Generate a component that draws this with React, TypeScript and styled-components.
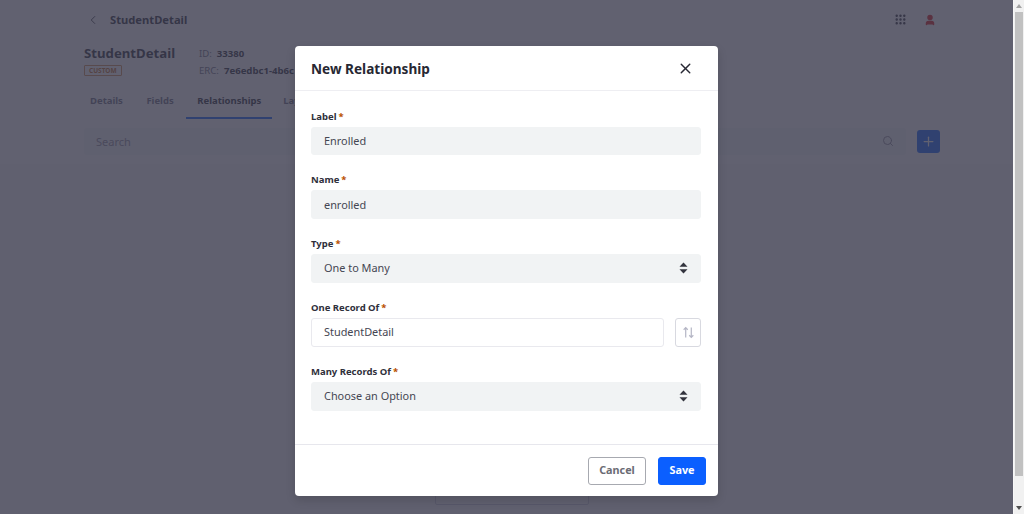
import React from 'react'
import styled, { createGlobalStyle } from 'styled-components'
import { ChevronLeft, Grip, Plus, Search, User, X } from 'lucide-react'

const FONT = '"Noto Sans", "Open Sans", sans-serif'

const GlobalStyle = createGlobalStyle`
  html, body {
    margin: 0;
    height: 514px;
    overflow: hidden;
    background: #fff;
    font-family: ${FONT};
  }
  * { box-sizing: border-box; }
`

const Viewport = styled.div`
  position: relative;
  display: flex;
  width: 1024px;
  height: 514px;
  overflow: hidden;
`

const Page = styled.div`
  position: relative;
  flex: 1;
  min-width: 0;
  height: 514px;
  overflow: hidden;
  background: #f9f9fa;
`

const Backdrop = styled.div`
  position: absolute;
  inset: 0;
  background: rgba(58, 58, 76, 0.8);
`

const ScrollBar = styled.div`
  width: 11px;
  height: 514px;
  background: #f1f1f1;
  padding: 4px 1px 4px;
  display: flex;
  flex-direction: column;
  align-items: center;
  border-left: 1px solid #f7f7f7;
`

const ScrollArrow = styled.div<{ $down?: boolean }>`
  width: 0;
  height: 0;
  border-left: 3px solid transparent;
  border-right: 3px solid transparent;
  border-bottom: ${(p) => (p.$down ? '0' : '4px solid #a3a3a3')};
  border-top: ${(p) => (p.$down ? '4px solid #505050' : '0')};
  margin-top: ${(p) => (p.$down ? 'auto' : '0')};
`

const ScrollThumb = styled.div`
  width: 100%;
  height: 464px;
  margin-top: 4px;
  background: #c1c1c1;
`

const TopBar = styled.header`
  display: flex;
  align-items: center;
  height: 39px;
  padding: 0 77px 0 86px;
  background: #fff;
  color: #272833;
`

const BackTitle = styled.span`
  margin-left: 10px;
  font-size: 11.2px;
  font-weight: 700;
`

const TopIcons = styled.div`
  margin-left: auto;
  display: flex;
  align-items: center;
  gap: 17px;
  color: #272833;
`

const HeaderPanel = styled.section`
  background: #fff;
  height: 125px;
  padding: 5px 73px 0 84px;
`

const InfoRow = styled.div`
  display: flex;
  gap: 30px;
  height: 38px;
`

const NameBlock = styled.div`
  display: flex;
  flex-direction: column;
  width: 85px;
`

const EntityName = styled.h1`
  margin: 0;
  font-size: 13.2px;
  line-height: 18px;
  font-weight: 700;
  color: #272833;
  white-space: nowrap;
`

const Badge = styled.span`
  align-self: flex-start;
  margin-top: 3px;
  padding: 0 4px;
  height: 11px;
  line-height: 10px;
  border: 1px solid #d08a50;
  border-radius: 1px;
  font-size: 6.5px;
  font-weight: 700;
  color: #c06a20;
`

const MetaColumn = styled.div`
  display: flex;
  flex-direction: column;
  gap: 4px;
  padding-top: 3px;
`

const MetaLine = styled.div`
  display: flex;
  gap: 5px;
  font-size: 9.6px;
  line-height: 13px;
  color: #6b6c7e;
  white-space: nowrap;
`

const MetaValue = styled.b`
  color: #272833;
`

const Tabs = styled.nav`
  display: flex;
  height: 37px;
  margin-left: -5px;
`

const Tab = styled.div<{ $active?: boolean }>`
  display: flex;
  align-items: center;
  padding: 1px 11px 0;
  margin-right: ${(p) => (p.$active ? '0' : '1.5px')};
  font-size: 9.5px;
  font-weight: 700;
  color: ${(p) => (p.$active ? '#272833' : '#6b6c7e')};
  border-bottom: 2px solid ${(p) => (p.$active ? '#0b5fff' : 'transparent')};
`

const SearchRow = styled.div`
  display: flex;
  align-items: center;
  gap: 11px;
  margin-top: 9px;
`

const SearchBox = styled.div`
  flex: 1;
  height: 27px;
  display: flex;
  align-items: center;
  justify-content: space-between;
  padding: 0 12px 1px;
  background: #f6f7f8;
  border-radius: 3px;
  font-size: 11px;
  color: #8a8b99;
`

const AddButton = styled.div`
  width: 23px;
  height: 23px;
  border-radius: 3px;
  display: flex;
  align-items: center;
  justify-content: center;
  background: #0b5fff;
  color: #fff;
`

const UnderBox = styled.div`
  position: absolute;
  left: 435px;
  top: 480px;
  width: 154px;
  height: 25px;
  border: 1px solid #cdced9;
  border-radius: 2px;
`

const Modal = styled.div`
  position: absolute;
  left: 295px;
  top: 46px;
  width: 423px;
  height: 450px;
  display: flex;
  flex-direction: column;
  background: #fff;
  border-radius: 4px;
  box-shadow: 0 4px 10px rgba(0, 0, 0, 0.15);
`

const ModalHead = styled.div`
  height: 45px;
  flex: none;
  display: flex;
  align-items: center;
  justify-content: space-between;
  padding: 0 24px 0 16px;
  border-bottom: 1px solid #eeeef2;
`

const ModalTitle = styled.h2`
  margin: 0;
  font-size: 13.6px;
  font-weight: 700;
  color: #272833;
`

const CloseIcon = styled(X)`
  color: #272833;
`

const ModalBody = styled.div`
  flex: 1;
  padding: 18.5px 17px 0 16px;
  display: flex;
  flex-direction: column;
  gap: 18.25px;
`

const Field = styled.div`
  display: flex;
  flex-direction: column;
  gap: 4px;
`

const Label = styled.label`
  font-size: 9.5px;
  line-height: 13px;
  height: 13px;
  font-weight: 700;
  color: #2f303b;
`

const Required = styled.span`
  margin-left: 2px;
  color: #b95000;
`

const FieldRow = styled.div`
  display: flex;
  align-items: center;
  gap: 11px;
`

const Control = styled.div<{ $plain?: boolean }>`
  flex: 1 1 auto;
  height: 28.5px;
  display: flex;
  align-items: center;
  justify-content: space-between;
  padding: 0 12px 1px;
  border-radius: 3px;
  font-size: 10.9px;
  color: #454652;
  background: ${(p) => (p.$plain ? '#fff' : '#f1f3f4')};
  border: 1px solid ${(p) => (p.$plain ? '#e9e9ee' : '#f1f3f4')};
`

const SwapButton = styled.div`
  width: 26px;
  height: 29px;
  flex: none;
  display: flex;
  align-items: center;
  justify-content: center;
  border: 1px solid #d8d9e0;
  border-radius: 3px;
  color: #b5b6c5;
`

const ModalFoot = styled.div`
  height: 52px;
  flex: none;
  display: flex;
  justify-content: flex-end;
  gap: 12px;
  padding: 12px 12px 0 0;
  border-top: 1px solid #e7e7ed;
`

const Button = styled.button<{ $primary?: boolean }>`
  height: 28px;
  width: ${(p) => (p.$primary ? '48px' : '58px')};
  padding: 0 0 3px;
  border-radius: 3px;
  font-family: ${FONT};
  font-size: 10.8px;
  font-weight: 700;
  color: ${(p) => (p.$primary ? '#fff' : '#6b6c75')};
  background: ${(p) => (p.$primary ? '#0b5fff' : '#fff')};
  border: 1px solid ${(p) => (p.$primary ? '#0b5fff' : '#a7a9b0')};
`

// select caret, two stacked triangles
const Caret = () => (
  <svg width="9" height="12" viewBox="0 0 9 12" fill="#32333d">
    <path d="M4.5 0.5 8.5 4.8H0.5Z" />
    <path d="M4.5 11.5 0.5 7.2H8.5Z" />
  </svg>
)

const SwapIcon = () => (
  <svg width="13" height="13" viewBox="0 0 14 14" fill="none" stroke="currentColor" strokeWidth="1.3">
    <path d="M4 12.5V1.8M1.8 4 4 1.8 6.2 4" />
    <path d="M10 1.5V12.2M7.8 10 10 12.2 12.2 10" />
  </svg>
)

const REQUIRED_FIELDS = [
  { label: 'Label', value: 'Enrolled' },
  { label: 'Name', value: 'enrolled' },
  { label: 'Type', value: 'One to Many', select: true },
]

export default function App() {
  return (
    <Viewport>
      <GlobalStyle />
      <Page>
        <TopBar>
          <ChevronLeft size={14} strokeWidth={1.5} />
          <BackTitle>StudentDetail</BackTitle>
          <TopIcons>
            <Grip size={13} strokeWidth={2.5} />
            <User size={12} strokeWidth={3} color="#da1414" fill="#da1414" />
          </TopIcons>
        </TopBar>
        <HeaderPanel>
          <InfoRow>
            <NameBlock>
              <EntityName>StudentDetail</EntityName>
              <Badge>CUSTOM</Badge>
            </NameBlock>
            <MetaColumn>
              <MetaLine>
                ID: <MetaValue>33380</MetaValue>
              </MetaLine>
              <MetaLine>
                ERC: <MetaValue>7e6edbc1-4b6c</MetaValue>
              </MetaLine>
            </MetaColumn>
          </InfoRow>
          <Tabs>
            <Tab>Details</Tab>
            <Tab>Fields</Tab>
            <Tab $active>Relationships</Tab>
            <Tab>Layouts</Tab>
          </Tabs>
          <SearchRow>
            <SearchBox>
              Search
              <Search size={12} />
            </SearchBox>
            <AddButton>
              <Plus size={15} />
            </AddButton>
          </SearchRow>
        </HeaderPanel>
        <UnderBox />
        <Backdrop />
      </Page>
      <ScrollBar>
        <ScrollArrow />
        <ScrollThumb />
        <ScrollArrow $down />
      </ScrollBar>
      <Modal>
        <ModalHead>
          <ModalTitle>New Relationship</ModalTitle>
          <CloseIcon size={17} strokeWidth={2} />
        </ModalHead>
        <ModalBody>
          {REQUIRED_FIELDS.map((f) => (
            <Field key={f.label}>
              <Label>
                {f.label}
                <Required>*</Required>
              </Label>
              <Control>
                {f.value}
                {f.select && <Caret />}
              </Control>
            </Field>
          ))}
          <Field>
            <Label>
              One Record Of<Required>*</Required>
            </Label>
            <FieldRow>
              <Control $plain>StudentDetail</Control>
              <SwapButton>
                <SwapIcon />
              </SwapButton>
            </FieldRow>
          </Field>
          <Field>
            <Label>
              Many Records Of<Required>*</Required>
            </Label>
            <Control>
              Choose an Option
              <Caret />
            </Control>
          </Field>
        </ModalBody>
        <ModalFoot>
          <Button>Cancel</Button>
          <Button $primary>Save</Button>
        </ModalFoot>
      </Modal>
    </Viewport>
  )
}
